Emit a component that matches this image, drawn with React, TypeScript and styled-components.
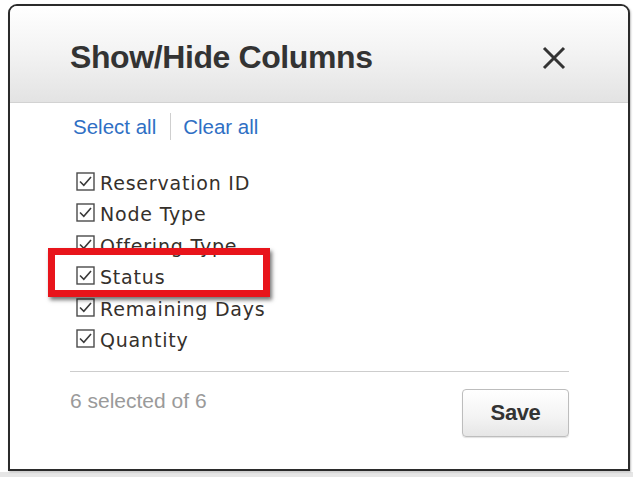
import React, { useState } from 'react'
import styled, { createGlobalStyle } from 'styled-components'

const GlobalStyle = createGlobalStyle`
  html, body {
    margin: 0;
    padding: 0;
    background: #ffffff;
  }
`

const Page = styled.div`
  width: 634px;
  height: 477px;
  display: flex;
  flex-direction: column;
  overflow: hidden;
  background: #fff;
`

const Stage = styled.div`
  flex: 1;
  padding: 4px 4px 0 8px;
  display: flex;
`

const Dialog = styled.div`
  position: relative;
  width: 622px;
  height: 467px;
  box-sizing: border-box;
  border: 2px solid #2b2b2b;
  border-radius: 9px 9px 0 0;
  display: flex;
  flex-direction: column;
  background: #fff;
  box-shadow: 1px 1px 2px rgba(0, 0, 0, 0.25);
  overflow: hidden;
`

const BottomStrip = styled.div`
  height: 5px;
  margin-top: 1px;
  margin-right: 1px;
  background: #e6e6e6;
`

const Header = styled.div`
  height: 97px;
  display: flex;
  align-items: center;
  justify-content: space-between;
  padding: 7px 62px 0 60px;
  box-sizing: border-box;
  background: linear-gradient(to bottom, #ffffff 0%, #f4f4f4 45%, #e3e3e3 100%);
  border-bottom: 1px solid #d2d2d2;
  flex-shrink: 0;
`

const Title = styled.h1`
  margin: 0;
  font-family: 'Liberation Sans', Arial, sans-serif;
  font-weight: bold;
  font-size: 32px;
  letter-spacing: -0.4px;
  color: #333;
`

const CloseButton = styled.button`
  border: none;
  background: transparent;
  padding: 0;
  width: 24px;
  height: 24px;
  cursor: pointer;
  display: flex;
`

const Body = styled.div`
  flex: 1;
  display: flex;
  flex-direction: column;
  padding: 0 59px 0 56px;
`

const LinkRow = styled.div`
  display: flex;
  align-items: center;
  margin: 10px 0 0 7px;
  height: 27px;
`

const TextLink = styled.a`
  font-family: 'Liberation Sans', Arial, sans-serif;
  font-size: 20.5px;
  color: #2f6fc4;
  text-decoration: none;
  cursor: pointer;
`

const LinkDivider = styled.span`
  width: 1px;
  height: 27px;
  background: #cfcfcf;
  margin: 0 12px 0 14px;
`

const ColumnList = styled.ul`
  list-style: none;
  margin: 27px 0 0 10px;
  padding: 0;
  display: flex;
  flex-direction: column;
`

const ColumnItem = styled.li`
  height: 31.5px;
  display: flex;
  align-items: center;
  gap: 5px;
  font-family: 'DejaVu Sans', Verdana, sans-serif;
  font-size: 19px;
  letter-spacing: 0.8px;
  color: #35302b;
  cursor: pointer;
`

const Box = styled.span`
  width: 19px;
  height: 19px;
  display: flex;
  margin-top: -3px;
`

const Highlight = styled.div`
  position: absolute;
  left: 38px;
  top: 242px;
  width: 208px;
  height: 35px;
  border: 7px solid #e8141b;
  box-shadow: 2px 3px 4px rgba(0, 0, 0, 0.55);
  pointer-events: none;
`

const Footer = styled.div`
  margin-top: auto;
  margin-left: 4px;
  border-top: 1px solid #cdcdcd;
  height: 97px;
  display: flex;
  justify-content: space-between;
  align-items: flex-start;
`

const Count = styled.span`
  font-family: 'Liberation Sans', Arial, sans-serif;
  font-size: 21px;
  color: #9a9a9a;
  margin-top: 17px;
`

const SaveButton = styled.button`
  margin-top: 17px;
  width: 107px;
  height: 48px;
  border: 1px solid #bdbdbd;
  border-radius: 4px;
  background: linear-gradient(to bottom, #ffffff 0%, #f3f3f3 60%, #e6e6e6 100%);
  box-shadow: 0 1px 1px rgba(0, 0, 0, 0.12);
  font-family: 'Liberation Sans', Arial, sans-serif;
  font-weight: bold;
  font-size: 22px;
  letter-spacing: -0.4px;
  color: #333;
  cursor: pointer;
`

const COLUMNS = ['Reservation ID', 'Node Type', 'Offering Type', 'Status', 'Remaining Days', 'Quantity']

function CheckBox({ checked }: { checked: boolean }) {
  return (
    <Box>
      <svg width="19" height="19" viewBox="0 0 19 19">
        <rect x="1" y="1" width="17" height="17" fill="#fff" stroke="#4a4a4a" strokeWidth="1.4" />
        {checked && <path d="M4 9.5 L7.8 13.3 L15 5" fill="none" stroke="#3a3a3a" strokeWidth="1.6" />}
      </svg>
    </Box>
  )
}

export default function App() {
  const [selected, setSelected] = useState<string[]>(COLUMNS)
  const toggle = (name: string) =>
    setSelected((prev) => (prev.includes(name) ? prev.filter((n) => n !== name) : [...prev, name]))

  return (
    <Page>
      <GlobalStyle />
      <Stage>
        <Dialog>
          <Header>
            <Title>Show/Hide Columns</Title>
            <CloseButton aria-label="Close">
              <svg width="24" height="24" viewBox="0 0 24 24">
                <path d="M2 2 L22 22 M22 2 L2 22" stroke="#333" strokeWidth="3" />
              </svg>
            </CloseButton>
          </Header>
          <Body>
            <LinkRow>
              <TextLink onClick={() => setSelected(COLUMNS)}>Select all</TextLink>
              <LinkDivider />
              <TextLink onClick={() => setSelected([])}>Clear all</TextLink>
            </LinkRow>
            <ColumnList>
              {COLUMNS.map((name) => (
                <ColumnItem key={name} onClick={() => toggle(name)}>
                  <CheckBox checked={selected.includes(name)} />
                  {name}
                </ColumnItem>
              ))}
            </ColumnList>
            <Footer>
              <Count>{`${selected.length} selected of ${COLUMNS.length}`}</Count>
              <SaveButton>Save</SaveButton>
            </Footer>
          </Body>
          <Highlight />
        </Dialog>
      </Stage>
      <BottomStrip />
    </Page>
  )
}
